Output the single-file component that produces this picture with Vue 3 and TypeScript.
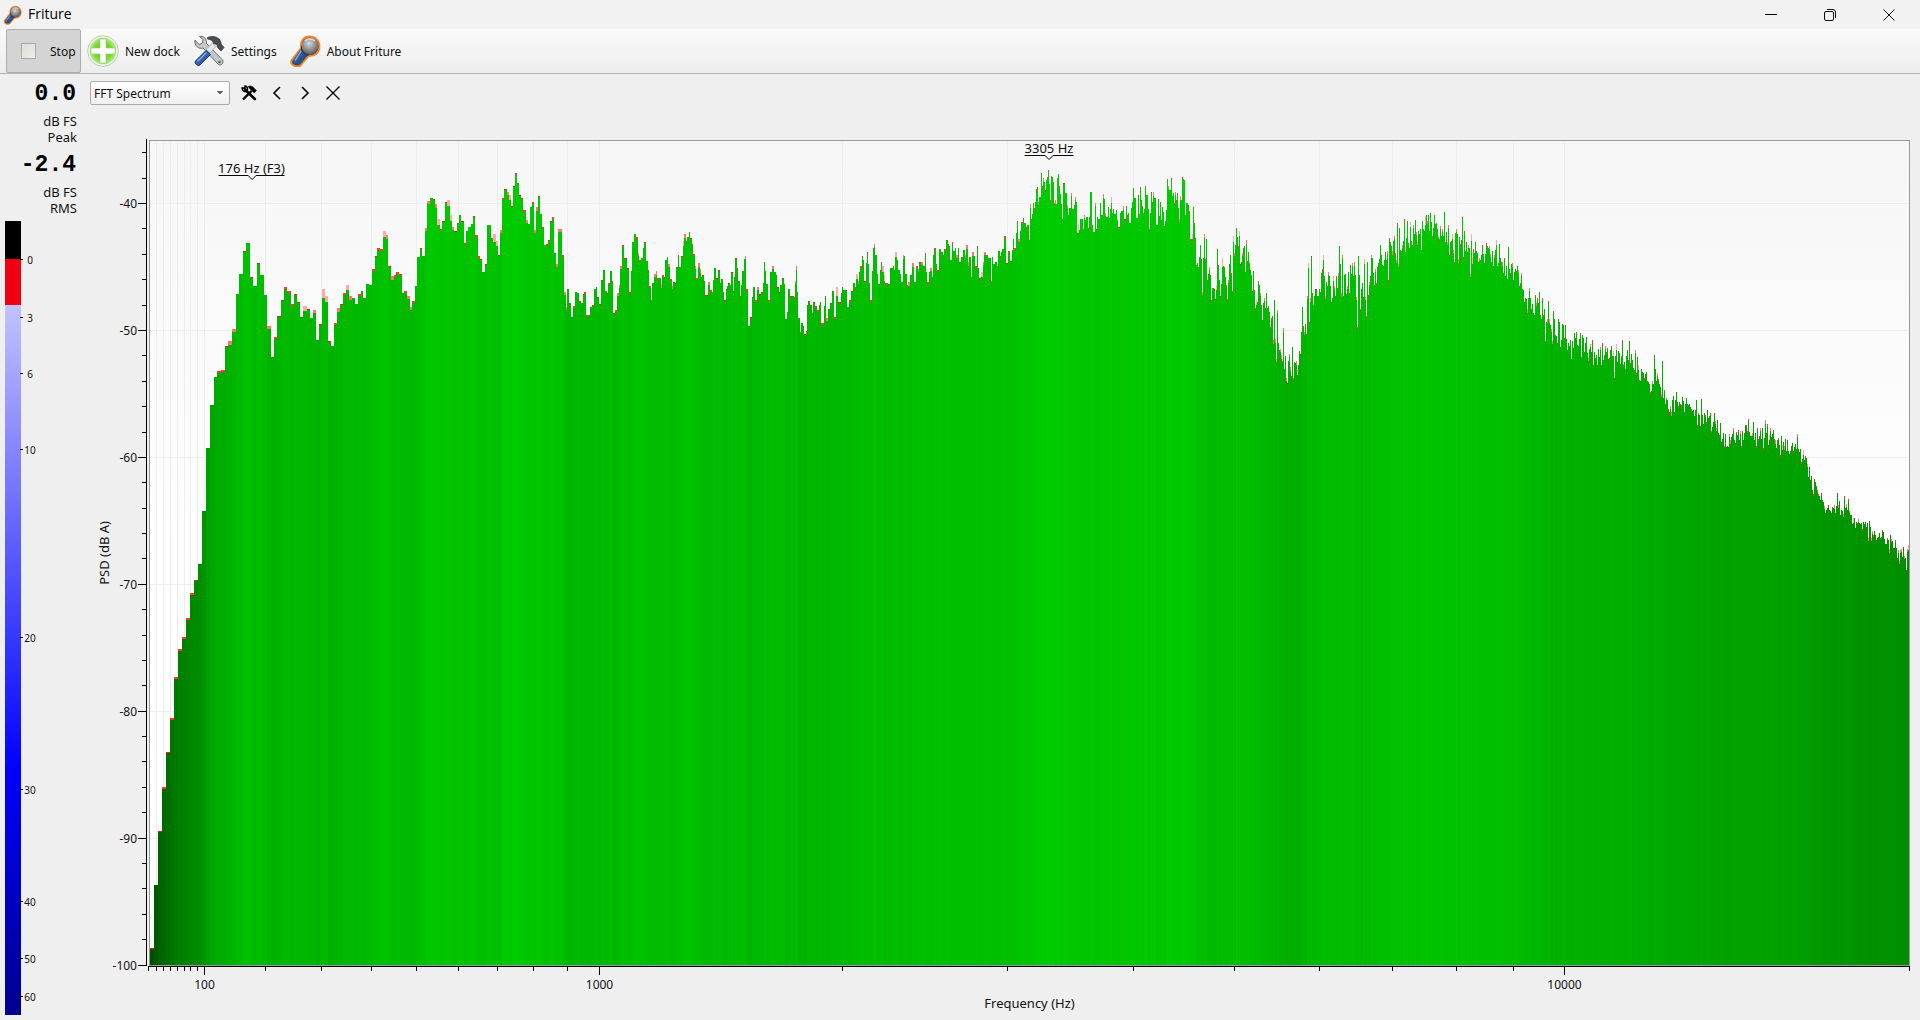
<script setup lang="ts">
import { ref } from 'vue'

interface Column {
  x: number
  w: number
  y: number
  peak: number
}

// Plot area in chart units
const LEFT = 150
const RIGHT = 1909
const TOP = 141
const BOTTOM = 965

const dock = ref('FFT Spectrum')

// Spectrum trace: "x:top/peak" starts a bin at x, "top/peak" is the next one-unit column
const trace = `
150:948/1 154:885 158:831/1 162:787/2 166:752/1 170:718/2 174:677/2 178:649/2 182:637/2 186:618/2 190:593/2
194:580/1 198:564 202:511 206:448 210:405 214:377 217:371/2 221:370/2 225:346/1 228:341/4 232:329/3 236:294
239:274 243:251/1 246:243 250:277/1 253:286 257:263/1 260:275 264:295 267:326/3 271:357 274:337/2 277:316/1
281:300/1 284:287/2 287:291/2 291:304/2 294:294/1 297:302/1 300:317 303:306/5 307:309/1 310:318 313:310/3
316:340 319:324/1 322:289/9 325:296/6 328:341/1 331:346 334:323/2 337:308/4 340:304/1 343:293/2 346:285/5
349:296/4 352:298 355:304 358:294/2 361:291 363:298 366:284 369:285 372:269/2 375:256/1 377:248/2 380:249/2
383:231/6 386:235/4 388:266/1 391:276/4 394:275/2 396:272/2 399:274/1 402:293 404:291/2 407:296/3 410:307/3
412:301/2 415:286 417:257 420:248/1 422:256 425:228/3 427:201/3 430:198 433:199/1 435:204/4 437:219/6
440:229/2 442:221/1 445:202/1 447:200/6 450:215/6 452:227/3 454:231/1 457:223/2 459:215 461:221/1 464:243/2
466:231 468:227 471:224 473:216/1 475:235/2 478:256/2 480:259/1 482:272 485:264/1 487:225 491:238 493:234/8
496:241/5 498:255/1 500:230/3 502:198/2 504:189/1 507:192/3 509:195/5 511:206/1 513:186/1 515:173/2 517:183
519:195/1 521:198/1 523:210/2 526:220/3 528:224 530:207 532:202/2 534:230/3 536:207/4 538:196/1 540:214
542:227/2 544:245 546:244/2 548:240/1 550:221/1 552:217/2 554:253 556:264/3 558:229/3 562:255/2 564:292/3
566:307/3 567:289 569:303 571:317 573:306/2 575:292 577:293 579:301/1 581:303 583:294/1 584:292/2 586:315/2
588:315 590:307 592:305/1 594:289 596:287 597:297/1 599:304/1 601:280/1 603:270 605:291 607:293/1 608:283/2
610:271 612:281 613:313/1 615:310/2 617:293/3 619:285/3 620:266/3 622:245/2 624:258/1 627:268/1 629:292/2
631:271 632:242 634:234 636:237/2 638:253/3 639:260/2 641:258 643:248 644:242/1 646:261 648:270/1 649:286/2
651:300 652:283 654:274/3 656:271/4 657:278/2 659:278 661:284/4 662:275/2 664:277/1 665:260 667:257 668:264/3
670:279/2 672:286/3 673:282 675:283/1 676:267/1 678:255/2 679:267 681:256/1 683:241/5 684:234/4 686:241/2
687:237 689:232 690:238/1 692:244/2 693:254/2 695:266/3 696:278/2 698:263/4 700:269/4 701:277 702:275/1
704:281 705:295/1 708:282/3 710:290/2 712:292 713:280 714:268 716:278/1 718:270/1 720:283 721:279 723:292
724:300/1 726:289/1 727:286 728:283/1 730:285 731:272/1 733:291/1 734:277/1 735:258/1 737:268/1 738:281
740:296 741:285 742:271 744:259 745:256/3 746:289/2 748:326 750:317/1 752:297 753:287 755:300/2 757:287/3
759:294/1 761:292/1 763:283 764:262 765:271 766:284 768:300/2 770:272 772:266/3 774:272 776:275 777:287/1
779:292/1 780:285 782:278/1 784:284 785:319 787:312 788:289 790:296/1 794:297/2 795:281/3 796:266/4 797:292
798:318 800:332 801:323 803:326 804:334/1 806:331/2 807:305 808:301/1 810:305/1 812:313 813:302/1 815:306/2
817:310/2 819:305 820:302 821:323/2 824:306 825:296 826:318/3 828:309 830:303 832:291 834:317/2 836:287/9
838:302/1 841:293 842:287 843:290 847:307 849:300/2 851:291/1 853:283 855:287/2 856:274/5 858:281/3 859:272
860:266/2 862:256/1 863:260 864:281/1 866:263 867:252/1 868:264 869:283 870:300/2 872:271 873:248 874:244/3
875:255 877:274 878:284 880:270/1 881:262/2 882:266/6 884:275/6 885:283/2 888:284 890:268 893:266 894:270
895:252/5 897:260 898:270 900:274 901:282 903:255/4 904:256 905:274 907:285/2 908:282/4 910:275 912:263/4
914:282 916:266/2 918:269/3 919:262/1 921:262/3 923:266 925:253/2 926:272 927:282/2 929:272 930:268/3 932:277
933:255 934:248/2 936:264 937:270/2 939:249 941:252 943:255/2 944:249/2 946:240/1 947:240 948:244/2 949:246
950:260 952:242/2 953:251 955:248 956:255/3 958:248 959:262/1 961:257 963:250 965:255/3 966:245/4 968:262/4
969:257 971:271/6 972:252/4 974:256 975:266/2 977:246/1 978:268 979:278/1 981:272/5 983:262/3 984:252/3
986:255 988:258 991:281/2 992:257 993:264 995:262 997:266 998:251 1000:256/2 1001:252 1002:249 1004:236/2
1006:263/1 1008:251/2 1010:261 1012:250 1013:239 1014:248/2 1016:233 1017:221/2 1018:239/3 1020:231 1021:222/2
1023:218/2 1024:223 1026:227/2 1027:225 1029:235/5 1030:204/4 1031:219 214 203 208/2 202 189/2 187/1 202/3
1039:197 1041:173/1 186/2 178/4 182 190/1 180 177 170/2 184 200/2 176/2 177 182 203/2 200/4 204 178 174 186/2
194 204 219 183/1 1065:193 1067:205/3 215 208 1071:193/3 209 1074:205 197/3 202 233 224/9 230 219 1083:229
215/3 220 217 1088:228/2 217 192 1092:225 232 1095:203/3 229/1 217/2 219 1100:203 215 1103:194/4 199 213/3
217 1108:207/2 218 209 197/6 213 209 214 1116:210 220 227/1 1120:213 211 1123:206/4 219/2 1126:206 215 213 223
1131:208 202 188 198 1136:218 1138:195/1 214 187/2 200 206/2 213 209 186 195 1148:209 229/2 213 192/1 202
192/4 198 1156:225 1158:199 216 202/2 220 207 212 226 221 210 179 186/3 190 1171:178/2 196 193 203/2 192/3
200 193 208 219/3 196/4 200 177/2 179 180 215 203 1188:205/1 211/2 239/2 1192:234/5 207 223/2 238 265 263/2
267 257 245 259 292/3 258 234/4 259/2 239 280 274/1 267/3 275 300/2 288 1214:289/1 299 285/5 249 265/1 280
296/1 284 258/9 266 267/2 277 285/2 299/2 280/3 264 255 273/2 291/2 236/6 253/3 245 228 237 246/2 231/5 264/1
262 253/3 248 246/1 272 240/4 261/2 252 263 270 275 291/1 271/1 290/2 308/2 300/5 302 281/2 285 293/3 305 320
303/2 298/3 308 293 308 306/2 312 327/2 318/2 316 340/4 300 339/4 359/3 310/3 343 350 349/3 355/4 361/2 328/3
369 356 378/3 383/1 361 354/3 367/4 376 347 378/2 362/2 363 361/4 370/5 365 351/2 354 332 307 326/2 332/3
324/2 334 296/3 263/5 322/2 298/4 256/1 293 305 296 289/1 1317:296 1319:289 292 273/2 269/2 255/5 276/2 296/3
282 286 272/3 276 286 302 298 276/5 286/3 296 276/2 288 273/3 246 264 293/4 255/3 296 275 274 294 286/3 272
293/2 265 274 263/3 276 262/3 275 297/3 327/2 256 275 309/2 289 283 297 259/5 297/3 316/2 262 295/2 282/3 276
255/3 258 273 285 269/3 283/2 267/2 263 259 245 255 265 266 260 252/2 260 251/3 280/2 238 242/2 246 251/4 241
236/3 253/2 260/3 223/2 264/3 228 250 251 245/3 241 219/2 247/5 238 221/2 243 248 222/5 241 245/2 225/3 234
220 232/3 242/3 231 234 229 250 221 229 231 216/9 215 221/3 215 231 213/1 222 236/2 228 215 224 223 229 237
239/2 226/3 236 229/3 236 212 242 232 242/3 225/3 255/1 242 241 234/5 250/3 262/2 233 229/3 234 259/4 237
244/2 240 217/1 257/2 231/2 251 242/1 252 245/3 248 274/3 234/7 258/6 249/2 253 242 251 253 262 258/3 260 255
245/2 254 263 254 243/2 246/2 248 246/3 254/3 262 251 266 255/3 250 240/5 266 263 244 258 262 262/4 273 258/2
276 266 279 247 269 273/2 264 263/4 280 272 269 271 266/1 270/3 286 283/2 273/3 289 290 302 298/2 299 309/4
298 288/3 298 309 304 313 315 295/2 303/3 298/2 303 292 315 319 298/2 315/2 309 341 322 319/4 301/2 319/4 325
329/3 341/3 311/2 319 335 336 343 319/2 322 347 340 324/1 325 338/2 325 339 350 343 346 340 359 341 348 333
338 332 345 346 339 333/2 357 335 338 352 343 337 353 358/3 349 344/3 352 340/2 365 352 358 355 365 349 357
347/3 365 343/2 360 355/2 346/3 352 348/2 359/2 358 350 346/2 356 351/5 372/6 356 344/6 362 351 353 364 356/2
340/2 365 362 369 356 350/2 360 341/1 363/2 354 360 368 370 350/3 373/2 357 365/5 380 381 369 372 373 378/2
374 372 381 382 384 392/2 391 381/3 384 355/1 369 381 373/3 379/2 384 387 394/3 361 398 390/2 404 398/2 400
409 412/2 406/3 412/4 400 396 412 400 392 402 406/2 402 404 405/2 397 401 412 404 398/1 404 405 404 407 409/2
411 410 416 410 400 425/2 413/2 415 426 399/1 415 424 413 415/2 422/2 410 418 416 413/2 431/2 427 422 413
421/3 428/3 420 433 435/2 423 442 439 433 446/2 434 447 446 447 434/3 440/4 437 434 428/3 440 443 432/2 435
430/2 440 431/3 446/2 431/2 440 433 425 425/2 431/2 419/2 432 436 436 433/3 422/1 440 433 446/2 428/2 439/2
436 428/3 439 428 448/2 438 420/4 433 424/2 445 435/5 428/3 437 434 430 439/2 440/4 448 440 438/2 445 455/2
436 445/5 442 446/4 439 451 440 451 454 451 446 443 451/2 447 444 449 434/3 449 452/1 449 462/2 459 450/5 460
456/2 458/1 464/3 477 467 480 476 490 494/2 479/2 482/1 486 490/2 494/2 496 500 493/2 500 502 506/3 513 510
508 505/2 510 511 513 507/2 508 505/4 513 506 493 505/3 501 515 510 511 514/3 496/2 508 504/3 510 499/2 511/2
515 515 524 518/5 518 528 522 523/2 519/3 523 524 523 529/2 522 524 522 527 523 538/3 521/1 527 538/3 531/3
535/2 531 535 540/1 538 537 533 538 537 530/1 532 539 544 544 538/2 540 549/4 535/1 539/3 541 548 548 540/2
548 558 550/3 561/3 550/3 549/3 557 547 556/3 558 570 549/3 545/5`

function parseTrace(source: string): Column[] {
  const columns: Column[] = []
  let next = LEFT
  for (const token of source.trim().split(/\s+/)) {
    const [, at, top, peak] = /^(?:(\d+):)?(\d+)(?:\/(\d+))?$/.exec(token)!
    const x = at ? Number(at) : next
    columns.push({ x, w: 1, y: Number(top), peak: Number(peak ?? 0) })
    next = x + 1
  }
  columns.forEach((column, i) => {
    column.w = (columns[i + 1]?.x ?? RIGHT) - column.x
  })
  return columns
}

const columns = parseTrace(trace)
const peaks = columns.filter((c) => c.peak > 0)

function barColor(c: Column): string {
  const level = (BOTTOM - c.y) / (BOTTOM - TOP)
  return `rgb(0, ${Math.round(75 + 135 * level)}, 0)`
}

function peakColor(c: Column): string {
  if (c.peak === 1) return '#f41c1c'
  if (c.peak === 2) return '#fa3a3a'
  if (c.peak <= 4) return '#fd7676'
  return '#ffaaaa'
}

// Mel-scaled frequency axis
const mel = (f: number) => 2595 * Math.log10(1 + f / 700)
const freqX = (f: number) => Math.min(Math.floor(134.1 + 0.4655 * mel(f)), RIGHT) + 0.5
const levelY = (db: number) => Math.floor(965 + (-100 - db) * 12.69) + 0.5

const freqTicks: number[] = []
for (let f = 20; f < 100; f += 10) freqTicks.push(f)
for (let f = 100; f < 1000; f += 100) freqTicks.push(f)
for (let f = 1000; f <= 10000; f += 1000) freqTicks.push(f)
freqTicks.push(20000)
const freqLabels = [100, 1000, 10000]

const levelTicks = Array.from({ length: 33 }, (_, i) => -100 + i * 2)
const levelLabels = [-40, -50, -60, -70, -80, -90, -100]

const leftPct = (x: number) => `${((x - LEFT) / (RIGHT - LEFT)) * 100}%`
const topPct = (y: number) => `${((y - TOP) / (BOTTOM - TOP)) * 100}%`

const markers = [
  { text: '176 Hz (F3)', x: 251.5, y: 160 },
  { text: '3305 Hz', x: 1049, y: 140 },
]

const meterTicks = [
  { text: '0', at: 4.8 },
  { text: '3', at: 12.1 },
  { text: '6', at: 19.1 },
  { text: '10', at: 28.7 },
  { text: '20', at: 52.4 },
  { text: '30', at: 71.5 },
  { text: '40', at: 85.7 },
  { text: '50', at: 92.8 },
  { text: '60', at: 97.6 },
]
</script>

<template>
  <div class="app">
    <svg class="defs" aria-hidden="true">
      <defs>
        <radialGradient id="ball" cx="0.45" cy="0.35" r="0.65">
          <stop offset="0" stop-color="#d8d8d8" />
          <stop offset="0.5" stop-color="#999" />
          <stop offset="1" stop-color="#5c5c5c" />
        </radialGradient>
        <linearGradient id="grip" x1="0" y1="0" x2="1" y2="1">
          <stop offset="0" stop-color="#4d80c4" />
          <stop offset="1" stop-color="#123468" />
        </linearGradient>
        <radialGradient id="leaf" cx="0.5" cy="0.5" r="0.5">
          <stop offset="0" stop-color="#5ec813" />
          <stop offset="0.65" stop-color="#7fd63a" />
          <stop offset="1" stop-color="#b9ec8d" />
        </radialGradient>
        <symbol id="mic" viewBox="0 0 32 32">
          <path d="M12 13C11 6 15 1.500 20.500 1.500C26.500 1.500 30.500 6 30.500 11.500C30.500 17 26.500 21.500 19.500 21L11.500 30.500C8 33 0.500 30 2.500 25.500Z" fill="#24508f" stroke="#f9841f" stroke-width="1.900" />
          <path d="M12.500 13L4.500 25C4 28 8.500 30.500 10.500 29L19 19.500Z" fill="url(#grip)" />
          <path d="M13 14.500L6 25.500" stroke="#7ca8e0" stroke-width="1.400" fill="none" />
          <path d="M13 10C12.500 14.500 16 19 21 19.500L19 21C14.500 20.500 11 16 12 12Z" fill="#343f4f" />
          <circle cx="21" cy="11" r="8.400" fill="url(#ball)" />
          <path d="M16 6C18 3.500 23 3 26 6" stroke="#eee" stroke-opacity="0.700" stroke-width="1.600" fill="none" />
        </symbol>
      </defs>
    </svg>

    <header class="titlebar">
      <svg class="title-icon" aria-hidden="true"><use href="#mic" /></svg>
      <span class="title">Friture</span>
      <button class="win" type="button" aria-label="Minimize">
        <svg width="12" height="12" viewBox="0 0 12 12"><path d="M0 5.500H12" stroke="#000" fill="none" /></svg>
      </button>
      <button class="win" type="button" aria-label="Restore">
        <svg width="12" height="12" viewBox="0 0 12 12" fill="none" stroke="#111">
          <rect x="0.500" y="2.500" width="9" height="9" rx="1.500" />
          <path d="M3 0.500H9A2.500 2.500 0 0 1 11.500 3V9" />
        </svg>
      </button>
      <button class="win" type="button" aria-label="Close">
        <svg width="12" height="12" viewBox="0 0 12 12"><path d="M0.500 0.500L11.500 11.500M11.500 0.500L0.500 11.500" stroke="#111" fill="none" /></svg>
      </button>
    </header>

    <nav class="toolbar">
      <button class="tool stop" type="button" aria-pressed="true">
        <span class="stop-icon"></span><span class="tool-text">Stop</span>
      </button>
      <button class="tool" type="button">
        <svg class="tool-icon" viewBox="0 0 32 32" aria-hidden="true">
          <circle cx="16" cy="16" r="15.300" fill="#fff" stroke="#b4cfa0" />
          <circle cx="16" cy="16" r="13.500" fill="url(#leaf)" />
          <path d="M13 4H19V13H28V19H19V28H13V19H4V13H13Z" fill="#fff" stroke="#8cc663" stroke-width="0.600" />
        </svg>
        <span class="tool-text">New dock</span>
      </button>
      <button class="tool settings" type="button">
        <svg class="tool-icon" viewBox="0 0 32 32" aria-hidden="true">
          <path d="M2 5L6 9.500L9.500 8L10 4.500L6.500 1.500C10.500 0.500 14 3.500 13.500 8.500L29.500 25C31 28 28.500 31 25.500 29.500L10 13C5.500 14.500 1 10.500 2 5Z" fill="#c6c8c8" stroke="#696c6c" />
          <circle cx="26.500" cy="27" r="1.200" fill="#555" />
          <path d="M19.500 8L23 11.500L17 18L13 14.500Z" fill="#e3e6e8" stroke="#858989" stroke-width="0.600" />
          <path d="M13 15.500L17.500 19.500L7 30C4.500 31.500 1 28.500 2.500 26Z" fill="#2f62ad" stroke="#173a73" />
          <path d="M13.500 17.500L4.500 26.500" stroke="#8ab1e6" stroke-width="1.300" />
          <path d="M14.500 2.500C19.500 0.500 24 1.500 27 5L28.500 9.500L31 12.500L28 16L24.500 12.500L24 9.500L20.500 8.500C20 5.500 17.500 4.500 14.500 4Z" fill="#4a4e50" stroke="#292d2e" stroke-width="0.700" />
        </svg>
        <span class="tool-text">Settings</span>
      </button>
      <button class="tool about" type="button">
        <svg class="tool-icon" aria-hidden="true"><use href="#mic" /></svg>
        <span class="tool-text">About Friture</span>
      </button>
    </nav>

    <main class="workspace">
      <aside class="levels">
        <div class="reading">0.0</div>
        <div class="unit">dB FS<br />Peak</div>
        <div class="reading">-2.4</div>
        <div class="unit">dB FS<br />RMS</div>
        <div class="meter">
          <div class="meter-bar"></div>
          <span v-for="t in meterTicks" :key="t.text" class="meter-tick" :style="{ top: t.at + '%' }">{{ t.text }}</span>
        </div>
      </aside>

      <section class="dock">
        <div class="dock-bar">
          <select v-model="dock" class="dock-select" aria-label="Dock widget">
            <option>FFT Spectrum</option>
          </select>
          <button class="dock-btn" type="button" aria-label="Dock settings">
            <svg width="16" height="16" viewBox="0 0 16 16" fill="none" stroke="#000">
              <path d="M4.500 5L13.800 14" stroke-width="2.600" stroke-linecap="round" />
              <path d="M1.300 2.200C0.500 5.500 3.500 7.200 6 6.200M3.500 0.800C6 0.800 7 3.200 6.200 5.600M3.600 1L4.200 3.600L1.500 2.800" stroke-width="1.500" />
              <path d="M10.500 6L2 14.500" stroke-width="2.400" />
              <path d="M7 1.500C10 0 12.500 2 13.500 3.500L15.500 5.500L13.200 8L9.500 4.500Z" fill="#000" stroke-width="0.500" />
            </svg>
          </button>
          <button class="dock-btn" type="button" aria-label="Previous">
            <svg width="16" height="16" viewBox="0 0 16 16"><path d="M11 2L5 8L11 14" fill="none" stroke="#000" stroke-width="1.600" /></svg>
          </button>
          <button class="dock-btn" type="button" aria-label="Next">
            <svg width="16" height="16" viewBox="0 0 16 16"><path d="M5 2L11 8L5 14" fill="none" stroke="#000" stroke-width="1.600" /></svg>
          </button>
          <button class="dock-btn" type="button" aria-label="Close dock">
            <svg width="16" height="16" viewBox="0 0 16 16"><path d="M1.500 1.500L14.500 14.500M14.500 1.500L1.500 14.500" fill="none" stroke="#000" stroke-width="1.300" /></svg>
          </button>
        </div>

        <div class="chart">
          <div class="y-title"><span>PSD (dB A)</span></div>
          <div class="y-axis">
            <span v-for="db in levelLabels" :key="db" class="y-label" :style="{ top: topPct(levelY(db)) }">{{ db }}</span>
            <svg class="y-scale" viewBox="138 141 9 824" preserveAspectRatio="none" aria-hidden="true">
              <path d="M146.500 139V966" />
              <path v-for="db in levelTicks" :key="db" :d="`M${db % 10 === 0 ? 138 : 142} ${levelY(db)}H147`" />
            </svg>
          </div>
          <div class="plot">
            <svg class="plot-area" viewBox="150 141 1759 824" preserveAspectRatio="none" shape-rendering="crispEdges" role="img" aria-label="FFT spectrum">
              <g stroke="#ededed">
                <path v-for="f in freqTicks" :key="f" :d="`M${freqX(f)} 141V965`" />
                <path v-for="db in levelLabels" :key="db" :d="`M150 ${levelY(db)}H1909`" />
              </g>
              <rect v-for="c in columns" :key="c.x" :x="c.x" :y="c.y" :width="c.w" :height="BOTTOM - c.y" :fill="barColor(c)" />
              <rect v-for="c in peaks" :key="c.x" :x="c.x" :y="c.y" :width="c.w" :height="c.peak" :fill="peakColor(c)" />
            </svg>
            <div v-for="m in markers" :key="m.text" class="marker" :style="{ left: leftPct(m.x), top: topPct(m.y) }">
              {{ m.text }}
              <svg class="notch" width="9" height="5" viewBox="0 0 9 5" aria-hidden="true">
                <path d="M0 0H9L4.500 4.500Z" fill="#f8f8f8" />
                <path d="M0 0.500H0.500L4.500 4.500L8.500 0.500H9" fill="none" stroke="#000" />
              </svg>
            </div>
          </div>
          <div class="x-axis">
            <svg class="x-scale" viewBox="150 966 1759 8" preserveAspectRatio="none" aria-hidden="true">
              <path d="M148 966.500H1910" />
              <path v-for="f in freqTicks" :key="f" :d="`M${freqX(f)} 966V${freqLabels.includes(f) ? 975 : 971}`" />
            </svg>
            <div class="x-labels">
              <span v-for="f in freqLabels" :key="f" class="x-label" :style="{ left: leftPct(freqX(f)) }">{{ f }}</span>
            </div>
            <div class="x-title">Frequency (Hz)</div>
          </div>
        </div>
      </section>
    </main>
  </div>
</template>

<style>
body {
  margin: 0;
  background: #efefef;
}
</style>

<style scoped>
.app {
  display: flex;
  flex-direction: column;
  min-height: 100vh;
  background: #efefef;
  color: #111;
  font: 12px/16px "Noto Sans", "Open Sans", sans-serif;
}

.defs {
  position: absolute;
  width: 0;
  height: 0;
}

button {
  margin: 0;
  padding: 0;
  border: 0;
  background: none;
  color: inherit;
  font: inherit;
}

.titlebar {
  display: flex;
  align-items: center;
  height: 29px;
  padding: 0 2px 0 3px;
  background: #f2f2f2;
}

.title-icon {
  width: 19px;
  height: 20px;
}

.title {
  flex: 1;
  margin-left: 6px;
  padding-bottom: 2px;
  color: #000;
  font: 14px/20px "Open Sans", "Noto Sans", sans-serif;
}

.win {
  display: flex;
  align-items: center;
  justify-content: center;
  width: 59px;
  height: 28px;
}

.toolbar {
  display: flex;
  height: 44px;
  padding-left: 6px;
  border-bottom: 1px solid #b4b4b4;
  background: linear-gradient(#fafafa, #ededed);
}

.tool {
  display: flex;
  align-items: center;
  gap: 6px;
  margin-left: 6px;
  white-space: nowrap;
}

.tool-text {
  padding-top: 2px;
}

.tool.settings {
  margin-left: 13px;
}

.tool.about {
  margin-left: 12px;
}

.tool.stop {
  box-sizing: border-box;
  gap: 14px;
  width: 75px;
  margin-left: 0;
  padding-left: 14px;
  border: 1px solid #adadad;
  border-radius: 2px;
  background: #d4d4d4;
}

.stop-icon {
  box-sizing: border-box;
  width: 15px;
  height: 16px;
  border: 1px solid #a9aca5;
  background: linear-gradient(135deg, #dcdfd8, #eceee9);
}

.tool-icon {
  width: 32px;
  height: 32px;
}

.workspace {
  display: flex;
  flex: 1;
}

.levels {
  display: flex;
  flex-direction: column;
  box-sizing: border-box;
  width: 90px;
  padding: 2px 0 5px 5px;
}

.reading {
  height: 36px;
  margin-right: 14px;
  color: #000;
  font: bold 23px/36px "Liberation Mono", monospace;
  text-align: right;
}

.unit {
  margin-right: 13px;
  padding: 1px 0 2px;
  font-size: 13px;
  text-align: right;
}

.meter {
  position: relative;
  flex: 1;
  margin-top: 3px;
}

.meter-bar {
  width: 16px;
  height: 100%;
  background: linear-gradient(#000 4.8%, #f00010 4.8% 10.6%, #c2c2ff 10.6%, #00f 69%, #00008c);
}

.meter-tick {
  position: absolute;
  left: 15px;
  display: flex;
  align-items: center;
  justify-content: center;
  width: 18px;
  padding-left: 1px;
  height: 12px;
  margin-top: -5px;
  font-size: 10px;
  line-height: 12px;
}

.meter-tick::before {
  position: absolute;
  top: 5px;
  left: 0;
  width: 3px;
  height: 1px;
  background: #000;
  content: "";
}

.dock {
  display: flex;
  flex: 1;
  flex-direction: column;
  min-width: 0;
}

.dock-bar {
  display: flex;
  align-items: center;
  gap: 12px;
  height: 38px;
}

.dock-select {
  width: 140px;
  height: 24px;
  margin-right: -1px;
  padding: 1px 16px 0 3px;
  border: 1px solid #aaa;
  border-radius: 2px;
  appearance: none;
  background:
    linear-gradient(to bottom right, #666 50%, transparent 50%) right 5px center / 4px 4px no-repeat,
    linear-gradient(to bottom left, #666 50%, transparent 50%) right 9px center / 4px 4px no-repeat,
    linear-gradient(#fff, #f0f0f0);
  color: #111;
  font: inherit;
}

.dock-btn {
  width: 16px;
  height: 16px;
}

.dock-btn svg {
  display: block;
}

.chart {
  display: grid;
  flex: 1;
  grid-template-columns: 28px 29px 1fr;
  grid-template-rows: minmax(300px, 1fr) 54px;
  padding: 28px 10px 0 0;
}

.y-title {
  display: flex;
  align-items: center;
  justify-content: center;
  font-size: 13px;
}

.y-title span {
  white-space: nowrap;
  writing-mode: vertical-rl;
  transform: rotate(180deg);
}

.y-axis {
  position: relative;
  margin: 1px 0;
}

.y-label {
  position: absolute;
  right: 10px;
  margin-top: -8px;
}

.y-scale {
  position: absolute;
  top: 0;
  right: 0;
  width: 9px;
  height: 100%;
  overflow: visible;
  stroke: #000;
}

.plot {
  position: relative;
  margin-left: 2px;
  border: 1px solid #999;
  background: linear-gradient(#f6f6f6, #fff 50%);
}

.plot-area {
  position: absolute;
  width: 100%;
  height: 100%;
}

.marker {
  position: absolute;
  height: 15px;
  border-bottom: 1px solid #000;
  font-size: 13px;
  line-height: 16px;
  white-space: nowrap;
  transform: translateX(-50%);
}

.notch {
  position: absolute;
  top: 15px;
  left: calc(50% - 4px);
}

.x-axis {
  grid-column: 3;
  margin: 0 1px 0 3px;
}

.x-scale {
  display: block;
  width: 100%;
  height: 8px;
  overflow: visible;
  stroke: #000;
}

.x-labels {
  position: relative;
  height: 21px;
}

.x-label {
  position: absolute;
  top: 3px;
  transform: translateX(-50%);
}

.x-title {
  font-size: 13px;
  text-align: center;
}
</style>
